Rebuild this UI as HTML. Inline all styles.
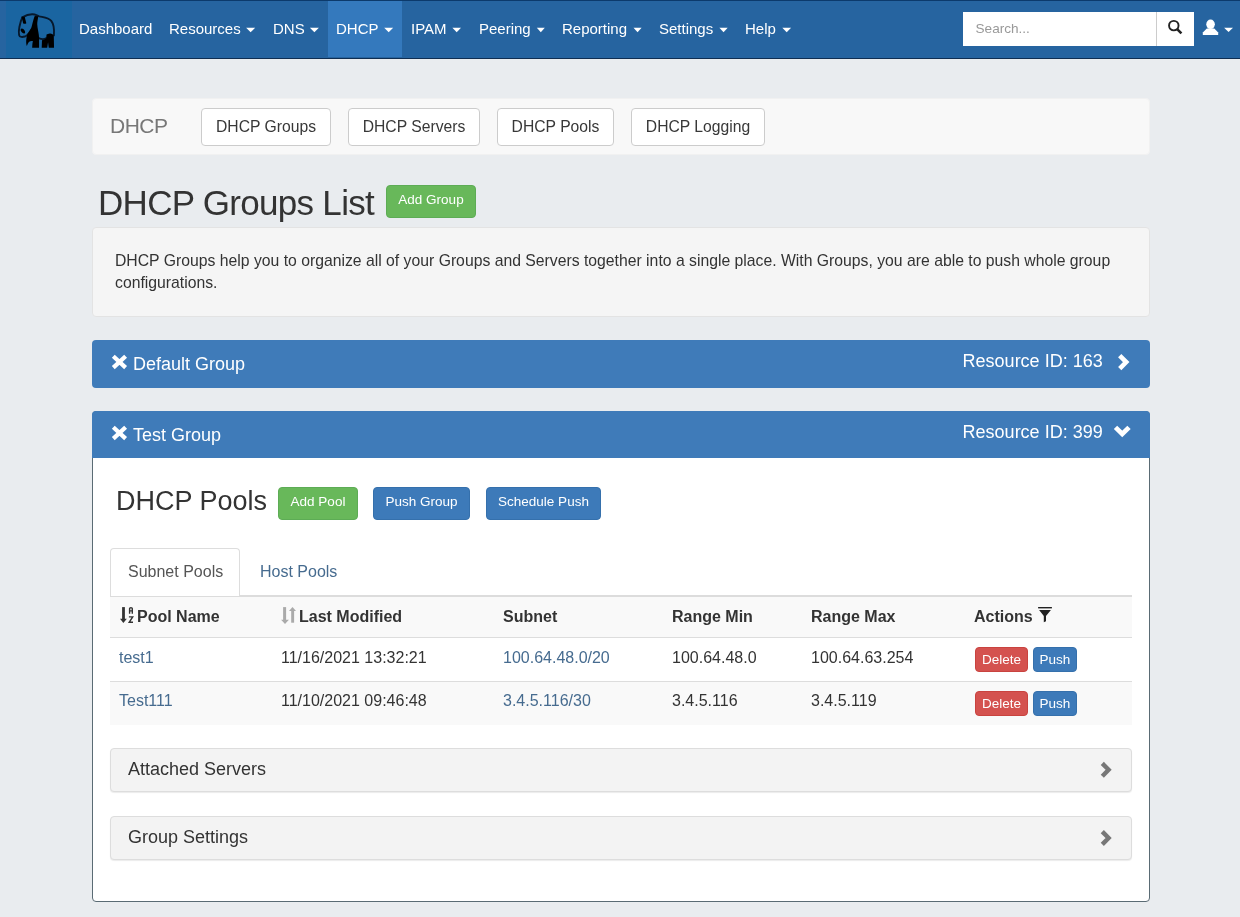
<!DOCTYPE html>
<html><head><meta charset="utf-8">
<style>
*{box-sizing:border-box;margin:0;padding:0}
html,body{width:1240px;height:917px;overflow:hidden}
body{will-change:transform;background:#e9ecef;font-family:"Liberation Sans",sans-serif;color:#333;position:relative}
.a{position:absolute;white-space:nowrap}
#nav{left:0;top:0;width:1240px;height:59px;background:#2664a0;border-top:1px solid #0c3a6c;border-bottom:1px solid #0f2e52}
#logo{left:6px;top:1px;width:66px;height:57px;background:#1a65a1}
#act{left:328px;top:1px;width:74px;height:56px;background:#3479bd}
.ni{top:19px;font-size:15px;line-height:20px;color:#fff}
#search{left:963px;top:12px;width:194px;height:34px;background:#fff;border-right:1px solid #ccc}
#search span{position:absolute;left:12.5px;top:8px;font-size:13.6px;line-height:18px;color:#999}
#sbtn{left:1157px;top:12px;width:37px;height:34px;background:#fff}
#bc{left:92px;top:98px;width:1058px;height:57px;background:#f8f8f8;border-radius:4px;border:1px solid #f1f1f1}
.bclabel{left:110px;top:114px;font-size:21px;line-height:24px;letter-spacing:-0.5px;color:#777}
.bb{top:108px;height:38px;background:#fff;border:1px solid #ccc;border-radius:4px;font-size:15.7px;line-height:36px;color:#383838;text-align:center}
.h1{left:98px;top:183px;font-size:35px;line-height:40px;letter-spacing:-0.7px;color:#333}
.btn{border-radius:4px;color:#fff;text-align:center;font-size:13.5px}
.g{background:#68b85a;border:1px solid #5dac55}
.b{background:#3d7ab9;border:1px solid #3570ac}
.r{background:#d4524f;border:1px solid #c9433f}
#well{left:92px;top:227px;width:1058px;height:90px;background:#f5f5f5;border:1px solid #e3e3e3;border-radius:4px}
#well p{position:absolute;left:22px;top:22px;width:1020px;font-size:15.75px;line-height:22px;color:#333;white-space:normal}
.ph{left:92px;width:1058px;height:48px;background:#3f7bb9;border-radius:4px}
.pt{font-size:18px;line-height:22px;color:#fff}
#p2{left:92px;top:411px;width:1058px;height:491px;background:#fff;border:1px solid #5a6b74;border-radius:4px}
#p2h{left:-1px;top:-1px;width:1058px;height:47px;background:#3f7bb9;border-radius:4px 4px 0 0}
.h2{left:116px;top:485px;font-size:27px;line-height:32px;color:#333}
#tabline{left:110px;top:596px;width:1022px;height:1px;background:#dcdcdc}
#tabline2{left:240px;top:595px;width:892px;height:1px;background:#dcdcdc}
#tab{left:110px;top:548px;width:130px;height:48px;background:#fff;border:1px solid #ddd;border-bottom:none;border-radius:4px 4px 0 0}
.t16{font-size:16px;line-height:20px}
.lnk{color:#466b8f}
.row{left:110px;width:1022px}
.th{font-weight:bold;color:#333}
.sbox{left:110px;width:1022px;height:44px;background:#f3f3f3;border:1px solid #ddd;border-radius:4px;box-shadow:0 1px 1px rgba(0,0,0,.08)}
</style></head><body>
<div id="nav" class="a"></div>
<div id="logo" class="a"></div>
<div id="act" class="a"></div>
<div class="a ni" style="left:79px">Dashboard</div>
<div class="a ni" style="left:169px">Resources</div>
<div class="a ni" style="left:273px">DNS</div>
<div class="a ni" style="left:336px">DHCP</div>
<div class="a ni" style="left:411px">IPAM</div>
<div class="a ni" style="left:479px">Peering</div>
<div class="a ni" style="left:562px">Reporting</div>
<div class="a ni" style="left:659px">Settings</div>
<div class="a ni" style="left:745px">Help</div>
<div id="search" class="a"><span>Search...</span></div>
<div id="sbtn" class="a"></div>

<div id="bc" class="a"></div>
<div class="a bclabel">DHCP</div>
<div class="a bb" style="left:201px;width:130px">DHCP Groups</div>
<div class="a bb" style="left:348px;width:132px">DHCP Servers</div>
<div class="a bb" style="left:497px;width:117px">DHCP Pools</div>
<div class="a bb" style="left:631px;width:134px">DHCP Logging</div>

<div class="a h1">DHCP Groups List</div>
<div class="a btn g" style="left:386px;top:185px;width:90px;height:33px;line-height:28px">Add Group</div>

<div id="well" class="a"><p>DHCP Groups help you to organize all of your Groups and Servers together into a single place. With Groups, you are able to push whole group configurations.</p></div>

<div class="a ph" style="top:340px"></div>
<div class="a pt" style="left:133px;top:353px">Default Group</div>
<div class="a pt" style="left:962.6px;top:350px">Resource ID: 163</div>

<div id="p2" class="a"><div id="p2h" class="a"></div></div>
<div class="a pt" style="left:133px;top:424px">Test Group</div>
<div class="a pt" style="left:962.6px;top:421px">Resource ID: 399</div>

<div class="a h2">DHCP Pools</div>
<div class="a btn g" style="left:278px;top:487px;width:80px;height:33px;line-height:28px">Add Pool</div>
<div class="a btn b" style="left:373px;top:487px;width:97px;height:33px;line-height:28px">Push Group</div>
<div class="a btn b" style="left:486px;top:487px;width:115px;height:33px;line-height:28px">Schedule Push</div>

<div id="tab" class="a"></div>
<div id="tabline" class="a"></div>
<div id="tabline2" class="a"></div>
<div class="a t16" style="left:128px;top:562px;color:#555">Subnet Pools</div>
<div class="a t16 lnk" style="left:260px;top:562px">Host Pools</div>

<div class="a row" style="top:597px;height:41px;background:#f9f9f9;border-bottom:1px solid #ddd"></div>
<div class="a row" style="top:638px;height:44px;background:#fff;border-bottom:1px solid #ddd"></div>
<div class="a row" style="top:682px;height:43px;background:#f9f9f9"></div>

<div class="a t16 th" style="left:137px;top:607px">Pool Name</div>
<div class="a t16 th" style="left:299px;top:607px">Last Modified</div>
<div class="a t16 th" style="left:503px;top:607px">Subnet</div>
<div class="a t16 th" style="left:672px;top:607px">Range Min</div>
<div class="a t16 th" style="left:811px;top:607px">Range Max</div>
<div class="a t16 th" style="left:974px;top:607px">Actions</div>

<div class="a t16 lnk" style="left:119px;top:648px">test1</div>
<div class="a t16" style="left:281px;top:648px">11/16/2021 13:32:21</div>
<div class="a t16 lnk" style="left:503px;top:648px">100.64.48.0/20</div>
<div class="a t16" style="left:672px;top:648px">100.64.48.0</div>
<div class="a t16" style="left:811px;top:648px">100.64.63.254</div>
<div class="a btn r" style="left:975px;top:647px;width:53px;height:25px;line-height:23px">Delete</div>
<div class="a btn b" style="left:1033px;top:647px;width:44px;height:25px;line-height:23px">Push</div>

<div class="a t16 lnk" style="left:119px;top:691px">Test111</div>
<div class="a t16" style="left:281px;top:691px">11/10/2021 09:46:48</div>
<div class="a t16 lnk" style="left:503px;top:691px">3.4.5.116/30</div>
<div class="a t16" style="left:672px;top:691px">3.4.5.116</div>
<div class="a t16" style="left:811px;top:691px">3.4.5.119</div>
<div class="a btn r" style="left:975px;top:691px;width:53px;height:25px;line-height:23px">Delete</div>
<div class="a btn b" style="left:1033px;top:691px;width:44px;height:25px;line-height:23px">Push</div>

<div class="a sbox" style="top:748px"></div>
<div class="a pt" style="left:128px;top:758px;color:#333">Attached Servers</div>
<div class="a sbox" style="top:816px"></div>
<div class="a pt" style="left:128px;top:826px;color:#333">Group Settings</div>

<svg class="a" style="left:0;top:0" width="1240" height="917" viewBox="0 0 1240 917">
<!-- nav carets -->
<g fill="#fff"><polygon points="246.1,27.7 255.2,27.7 250.65,32.3"/><polygon points="309.9,27.7 318.9,27.7 314.40,32.3"/><polygon points="384.2,27.7 393.2,27.7 388.70,32.3"/><polygon points="452.4,27.7 461.0,27.7 456.70,32.3"/><polygon points="536.8,27.7 544.8,27.7 540.80,32.3"/><polygon points="633.5,27.7 641.6,27.7 637.55,32.3"/><polygon points="719.4,27.7 727.7,27.7 723.55,32.3"/><polygon points="782.3,27.7 791.1,27.7 786.70,32.3"/>
<polygon points="1224.1,27.8 1233,27.8 1228.55,32"/>
<ellipse cx="1210.55" cy="24.3" rx="4.3" ry="4.8"/>
<path d="M1206.8 28.6 H1214.3 L1218.2 32.4 V35.1 H1202.8 V32.4 Z"/>
</g>
<!-- search -->
<circle cx="1173.8" cy="25.6" r="4.75" fill="none" stroke="#222" stroke-width="1.9"/>
<line x1="1177.2" y1="29.2" x2="1181.4" y2="33.4" stroke="#222" stroke-width="2.6"/>
<!-- panda -->
<g transform="translate(10 8) scale(0.04797)">
<g fill="none" stroke="#06182c" stroke-width="40" stroke-linecap="round">
<path d="M258 195 C330 150 400 128 470 130 C530 132 560 160 610 175 C700 195 800 195 860 270 C915 340 925 450 915 570"/>
<path d="M256 195 C235 240 210 330 196 396 C185 450 180 520 190 565 C200 610 260 610 310 595 C340 585 365 565 385 535"/>
<path d="M600 628 C650 652 710 656 760 628"/>
</g>
<g fill="#000">
<path d="M246 186 L306 180 L340 318 C325 336 290 334 272 316 Z"/>
<path d="M222 448 C232 415 280 425 304 470 C322 505 318 538 290 532 C258 525 214 480 222 448 Z"/>
<path d="M516 166 L590 172 C580 240 566 300 568 338 C572 420 596 500 601 563 L606 621 L606 828 L462 828 L466 760 C469 730 474 705 478 692 C450 688 420 690 400 705 C380 725 366 760 351 792 C340 760 335 720 338 670 C343 600 362 545 383 508 C405 470 425 445 442 415 C458 375 472 300 490 240 C500 205 507 185 516 166 Z"/>
<path d="M760 628 C740 645 690 662 667 672 L661 828 L776 828 L793 712 L808 828 L918 828 L913 578 C892 545 862 530 830 533 C800 536 778 545 762 553 C757 585 757 610 760 628 Z"/>
</g>
</g>
<!-- panel icons -->
<g stroke="#fff" stroke-width="4.2" fill="none">
<path d="M113.3 356.2 L125.6 367.6 M125.6 356.2 L113.3 367.6"/>
<path d="M113.3 427.2 L125.6 438.6 M125.6 427.2 L113.3 438.6"/>
</g>
<polyline points="1119.7,355.6 1126.2,362.1 1119.7,368.6" fill="none" stroke="#fff" stroke-width="4.6" stroke-miterlimit="10"/>
<polyline points="1115.5,427.4 1122.25,434.0 1129,427.4" fill="none" stroke="#fff" stroke-width="4.8" stroke-miterlimit="10"/>
<polyline points="1102.3,763.4 1108.6,769.8 1102.3,776.2" fill="none" stroke="#777" stroke-width="4.4" stroke-miterlimit="10"/>
<polyline points="1102.3,831.6 1108.6,838 1102.3,844.4" fill="none" stroke="#777" stroke-width="4.4" stroke-miterlimit="10"/>
<!-- sort icons -->
<g fill="#333">
<rect x="122.1" y="607.1" width="2.8" height="12"/>
<polygon points="120,618.7 126.8,618.7 123.4,623"/>
</g>
<g fill="none" stroke="#333" stroke-width="1.4">
<path d="M129.6 613.8 V608.6 Q129.6 607.7 130.95 607.7 Q132.3 607.7 132.3 608.6 V613.8 M129.6 610.9 H132.3"/>
<path d="M128.9 616.9 H132.7 L129.2 622.3 H133"/>
</g>
<g fill="#aaa">
<rect x="283.1" y="607.1" width="3" height="13.2"/>
<polygon points="281.1,619.8 288.9,619.8 285,623.9"/>
<polygon points="289,611 296,611 292.5,607.1"/>
<rect x="291.2" y="610.5" width="2.9" height="12.2"/>
</g>
<g fill="#222">
<rect x="1038.1" y="607" width="13.8" height="1.4"/>
<path d="M1039.1 610.1 H1050.9 L1046 616 V621.3 L1043.8 622.3 V616 Z"/>
</g>
</svg>
</body></html>
